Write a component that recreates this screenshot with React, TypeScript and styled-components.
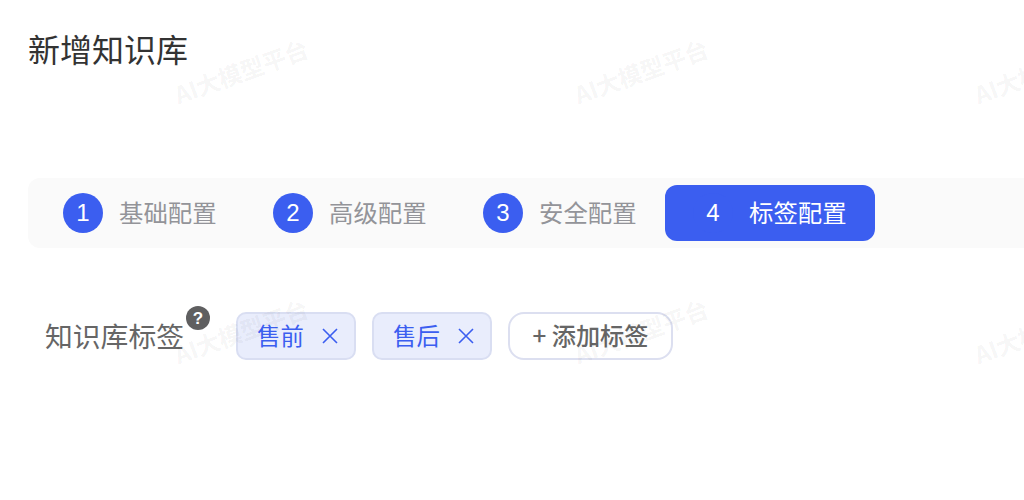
import styled, { createGlobalStyle } from "styled-components";

const GlobalStyle = createGlobalStyle`
  html, body {
    margin: 0;
    padding: 0;
    background: #fff;
    font-family: "Noto Sans CJK SC", "Liberation Sans", sans-serif;
  }
`;

const Page = styled.div`
  position: relative;
  width: 1024px;
  height: 500px;
  overflow: hidden;
  padding: 26px 0 0 28px;
  box-sizing: border-box;
`;

const Title = styled.h1`
  margin: 0;
  font-size: 32px;
  font-weight: 400;
  line-height: 44px;
  color: #333;
`;

const StepBar = styled.div`
  display: flex;
  width: 1100px;
  height: 70px;
  margin-top: 108px;
  padding: 7px;
  box-sizing: border-box;
  border-radius: 12px;
  background: #fafafa;
`;

const Step = styled.div<{ $active?: boolean }>`
  display: flex;
  align-items: center;
  width: 210px;
  height: 56px;
  padding-left: 28px;
  box-sizing: border-box;
  border-radius: 12px;
  background: ${(p) => (p.$active ? "#3b5ef0" : "transparent")};
  color: ${(p) => (p.$active ? "#fff" : "#939499")};
`;

const StepNum = styled.span`
  display: flex;
  justify-content: center;
  align-items: center;
  flex: none;
  width: 40px;
  height: 40px;
  border-radius: 50%;
  background: #3b5ef0;
  color: #fff;
  font-family: "Liberation Sans", sans-serif;
  font-size: 24px;
`;

const StepLabel = styled.span`
  margin-left: 16px;
  padding-bottom: 2px;
  font-size: 24.4px;
  line-height: 32px;
`;

const TagRow = styled.div`
  display: flex;
  align-items: center;
  gap: 16px;
  margin-top: 64px;
`;

const FieldLabel = styled.label`
  position: relative;
  display: block;
  width: 192px;
  padding: 0 0 2px 17px;
  box-sizing: border-box;
  font-size: 27.8px;
  line-height: 46px;
  color: #666;
`;

const HelpBadge = styled.span`
  position: absolute;
  left: 158px;
  top: -6px;
  display: flex;
  justify-content: center;
  align-items: center;
  width: 24px;
  height: 24px;
  padding-top: 2px;
  box-sizing: border-box;
  border-radius: 50%;
  background: #5f5f60;
  color: #fff;
  font-family: "Liberation Sans", sans-serif;
  font-size: 17px;
  font-weight: 700;
  line-height: 22px;
`;

const Tag = styled.div`
  display: flex;
  align-items: center;
  width: 120px;
  height: 48px;
  padding: 0 0 2px 19px;
  box-sizing: border-box;
  border: 2px solid #d9def2;
  border-radius: 10px;
  background: #e9edfc;
  color: #3b5ef0;
  font-size: 23.4px;
`;

const CloseIcon = styled.svg`
  width: 16px;
  height: 16px;
  margin: 2px 0 0 18px;
  flex: none;
`;

const AddButton = styled.button`
  width: 165px;
  height: 48px;
  padding: 0 0 2px;
  border: 2px solid #dcdff0;
  border-radius: 16px;
  background: #fff;
  color: #666;
  font-family: inherit;
  font-size: 24.2px;
  font-weight: 500;
  line-height: 32px;
`;

const Watermarks = styled.div`
  position: absolute;
  inset: 0;
  display: grid;
  grid-template-columns: repeat(3, 200px);
  grid-auto-rows: 130px;
  column-gap: 200px;
  row-gap: 130px;
  padding: 6px 0 0 141px;
  pointer-events: none;
`;

const Mark = styled.span`
  display: flex;
  justify-content: center;
  align-items: center;
  white-space: nowrap;
  transform: rotate(-20deg);
  font-size: 23.5px;
  font-weight: 700;
  color: rgba(0, 0, 0, 0.05);
`;

const steps = ["基础配置", "高级配置", "安全配置", "标签配置"];
const tags = ["售前", "售后"];

function App() {
  return (
    <Page>
      <GlobalStyle />
      <Title>新增知识库</Title>
      <StepBar>
        {steps.map((name, i) => (
          <Step key={name} $active={i === 3}>
            <StepNum>{i + 1}</StepNum>
            <StepLabel>{name}</StepLabel>
          </Step>
        ))}
      </StepBar>
      <TagRow>
        <FieldLabel>
          知识库标签
          <HelpBadge>?</HelpBadge>
        </FieldLabel>
        {tags.map((tag) => (
          <Tag key={tag}>
            {tag}
            <CloseIcon viewBox="0 0 16 16" fill="none" stroke="#3b5ef0" strokeWidth="1.6">
              <path d="M1 1 L15 15 M15 1 L1 15" />
            </CloseIcon>
          </Tag>
        ))}
        <AddButton>+ 添加标签</AddButton>
      </TagRow>
      <Watermarks>
        {Array.from({ length: 6 }).map((_, i) => (
          <Mark key={i}>AI大模型平台</Mark>
        ))}
      </Watermarks>
    </Page>
  );
}

export default App;
